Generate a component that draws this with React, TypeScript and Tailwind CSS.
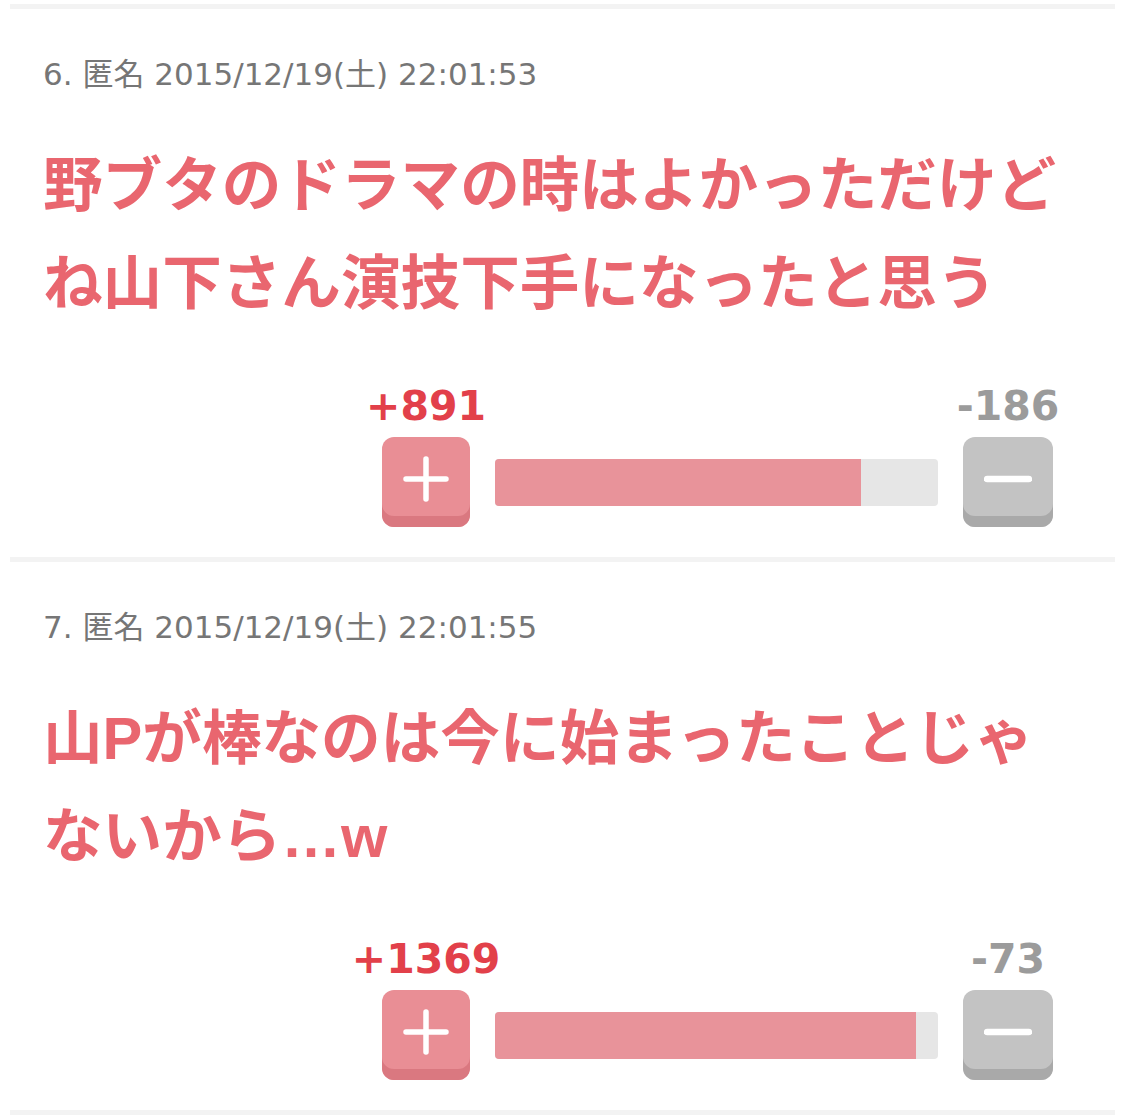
type Comment = {
  no: number;
  date: string;
  body: string;
  plus: number;
  minus: number;
};

const comments: Comment[] = [
  {
    no: 6,
    date: '2015/12/19(土) 22:01:53',
    body: '野ブタのドラマの時はよかっただけどね山下さん演技下手になったと思う',
    plus: 891,
    minus: 186,
  },
  {
    no: 7,
    date: '2015/12/19(土) 22:01:55',
    body: '山Pが棒なのは今に始まったことじゃないから…w',
    plus: 1369,
    minus: 73,
  },
];

const metaFont = { fontFamily: '"DejaVu Sans", "Noto Sans CJK JP", sans-serif' };
const bodyFont = { fontFamily: '"Liberation Sans", "Noto Sans CJK JP", sans-serif' };

function Separator() {
  return <div className="mx-[10px] h-[5px] bg-[#f3f3f3]" />;
}

function VoteBar({ plus, minus }: { plus: number; minus: number }) {
  const ratio = (plus / (plus + minus)) * 100;
  return (
    <div className="flex justify-end pr-[29px]">
      <div className="grid grid-cols-[88px_443px_90px] gap-x-[25px] gap-y-[7px]">
        <div
          className="flex justify-center text-[41px] font-bold leading-[48px] text-[#e2404a]"
          style={metaFont}
        >
          <span className="whitespace-nowrap">+{plus}</span>
        </div>
        <div />
        <div
          className="flex justify-center text-[41px] font-bold leading-[48px] text-[#9b9b9b]"
          style={metaFont}
        >
          <span className="whitespace-nowrap">-{minus}</span>
        </div>

        {/* plus button */}
        <button className="flex h-[90px] w-[88px] items-center justify-center rounded-[12px] bg-[#e98e95] pb-[6px] shadow-[inset_0_-11px_0_#da7880]">
          <svg width="46" height="46" viewBox="0 0 46 46">
            <path d="M23 3v40M3 23h40" stroke="#fff" strokeWidth="5.5" strokeLinecap="round" />
          </svg>
        </button>

        <div className="flex items-center">
          <div className="flex h-[47px] w-full overflow-hidden rounded-[4px] bg-[#e6e6e6]">
            <div className="h-full bg-[#e8939a]" style={{ width: `${ratio}%` }} />
          </div>
        </div>

        {/* minus button */}
        <button className="flex h-[90px] w-[90px] items-center justify-center rounded-[12px] bg-[#c3c3c3] pb-[6px] shadow-[inset_0_-11px_0_#a9a9a9]">
          <svg width="48" height="10" viewBox="0 0 48 10">
            <path d="M3 5h42" stroke="#fff" strokeWidth="6.5" strokeLinecap="round" />
          </svg>
        </button>
      </div>
    </div>
  );
}

function CommentCard({ c }: { c: Comment }) {
  return (
    <div>
      <div className="px-[43px] pt-[45px] pb-[30px]">
        <div className="text-[31px] leading-[40px] text-[#767676]" style={metaFont}>
          {c.no}. 匿名 {c.date}
        </div>
        <p
          className="mt-[43px] text-[59.6px] font-bold leading-[98px] text-[#e9666f]"
          style={bodyFont}
        >
          {c.body}
        </p>
        <div className="mt-[49px]">
          <VoteBar plus={c.plus} minus={c.minus} />
        </div>
      </div>
      <Separator />
    </div>
  );
}

export default function App() {
  return (
    <div className="min-h-screen w-full bg-white">
      <div className="pt-[4px]">
        <Separator />
      </div>
      {comments.map((c) => (
        <CommentCard key={c.no} c={c} />
      ))}
    </div>
  );
}
